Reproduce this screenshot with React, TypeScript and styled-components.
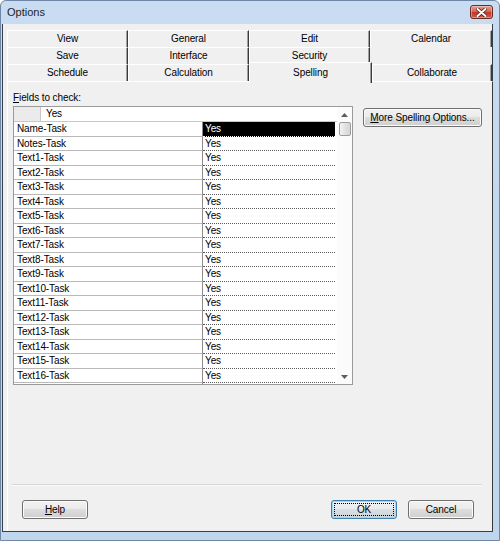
import React from 'react';
import styled, { createGlobalStyle, css } from 'styled-components';

const GlobalStyle = createGlobalStyle`
  html, body {
    margin: 0;
    padding: 0;
    background: #ffffff;
  }
  body {
    font-family: "Liberation Sans", Arial, sans-serif;
    font-size: 10px;
    letter-spacing: -0.1px;
    color: #000;
  }
`;

const Window = styled.div`
  width: 500px;
  height: 541px;
  box-sizing: border-box;
  display: flex;
  flex-direction: column;
  padding: 0 6px 8px 1px;
  border: 1px solid #6f87a6;
  border-radius: 6px 6px 0 0;
  background: linear-gradient(#c9dcf1, #c2d8ee 40%, #bfd6ed);
`;

const TitleBar = styled.div`
  height: 23px;
  display: flex;
  align-items: flex-start;
  justify-content: space-between;
  padding-left: 5px;
`;

const Title = styled.span`
  font-size: 11px;
  line-height: 22px;
  letter-spacing: 0;
  color: #1e1e1e;
`;

const CloseButton = styled.div`
  width: 23px;
  height: 14px;
  margin-top: 4px;
  box-sizing: border-box;
  border: 1px solid #6b2a22;
  border-radius: 3px;
  background: linear-gradient(#e5a092, #d4624f 50%, #c0392a 51%, #cf5c45);
  box-shadow: inset 0 0 0 1px rgba(255, 255, 255, 0.35);
  display: flex;
  align-items: center;
  justify-content: center;
`;

const Client = styled.div`
  flex: 1;
  display: flex;
  flex-direction: column;
  background: #f0f0f0;
  border: 1px solid #34404e;
  border-top: none;
  padding: 6px 0 0 4px;
`;

const TabStrip = styled.div`
  display: flex;
  flex-direction: column;
  width: 486px;
`;

const TabRow = styled.div<{ $cols: string }>`
  display: grid;
  grid-template-columns: ${(p) => p.$cols};
  height: 17px;
`;

const Tab = styled.div<{ $active?: boolean; $empty?: boolean }>`
  box-sizing: border-box;
  height: 17px;
  line-height: 16px;
  text-align: center;
  background: #f0f0f0;
  border-top: 1px solid #ffffff;
  border-left: 1px solid #ffffff;
  border-right: 1px solid #3a3a3a;
  box-shadow: inset -1px 0 #a0a0a0;
  ${(p) =>
    p.$empty &&
    css`
      border: none;
      box-shadow: none;
    `}
  ${(p) =>
    p.$active &&
    css`
      position: relative;
      z-index: 1;
      height: 21px;
      margin-top: -2px;
      line-height: 19px;
    `}
`;

const Panel = styled.div`
  flex: 1;
  display: flex;
  flex-direction: column;
  width: 486px;
  box-sizing: border-box;
  border-top: 1px solid #ffffff;
  border-left: 1px solid #ffffff;
  border-right: 1px solid #3a3a3a;
  padding: 9px 0 0 5px;
`;

const FieldLabel = styled.div`
  line-height: 13px;
  height: 15px;

  u {
    text-decoration: underline;
  }
`;

const ContentRow = styled.div`
  display: flex;
  align-items: flex-start;
  gap: 10px;
`;

const Grid = styled.div`
  width: 340px;
  height: 279px;
  box-sizing: border-box;
  border: 1px solid #9a9a9a;
  background: #ffffff;
  display: flex;
  overflow: hidden;
`;

const GridMain = styled.div`
  flex: 1;
  display: flex;
  flex-direction: column;
  overflow: hidden;
`;

const HeaderRow = styled.div`
  display: flex;
  height: 14px;
  flex: none;
  line-height: 14px;
  border-bottom: 1px solid #c8c8c8;
`;

const HeaderCorner = styled.div`
  width: 26px;
  background: #ebebeb;
  border-right: 1px solid #c8c8c8;
`;

const HeaderCell = styled.div`
  padding-left: 5px;
`;

const Row = styled.div`
  display: flex;
  height: 14.5px;
  flex: none;
  line-height: 13px;
`;

const NameCell = styled.div`
  width: 189px;
  box-sizing: border-box;
  padding-left: 3px;
  border-bottom: 1px solid #b9b9b9;
  border-right: 1px solid #8c8c8c;
  white-space: nowrap;
`;

const ValueCell = styled.div<{ $selected?: boolean }>`
  width: 132px;
  box-sizing: border-box;
  padding-left: 2px;
  border-bottom: 1px dotted #5a5a5a;
  ${(p) =>
    p.$selected &&
    css`
      background: #000000;
      color: #ffffff;
      border-bottom-color: #ffffff;
    `}
`;

const ScrollBar = styled.div`
  width: 15px;
  display: flex;
  flex-direction: column;
  align-items: center;
  background: #fbfbfb;
`;

const ArrowBox = styled.div`
  height: 15px;
  flex: none;
  display: flex;
  align-items: center;
  justify-content: center;
`;

const Thumb = styled.div`
  width: 12px;
  height: 14px;
  flex: none;
  box-sizing: border-box;
  border: 1px solid #9c9c9c;
  border-radius: 2px;
  background: linear-gradient(90deg, #f4f4f4, #e2e2e2 50%, #d6d6d6);
`;

const Track = styled.div`
  flex: 1;
`;

const PushButton = styled.button<{ $default?: boolean; $width: number }>`
  width: ${(p) => p.$width}px;
  height: 19px;
  padding: 0;
  font-family: inherit;
  font-size: 10px;
  letter-spacing: -0.1px;
  color: #000;
  border: 1px solid #707070;
  border-radius: 3px;
  background: linear-gradient(#f2f2f2, #ebebeb 45%, #dddddd 50%, #cfcfcf);
  box-shadow: inset 0 0 0 1px #fbfbfb;
  flex: none;

  u {
    text-decoration: underline;
  }

  ${(p) =>
    p.$default &&
    css`
      border-color: #3c7fb1;
      box-shadow: inset 0 0 0 1px #9fd7f5;
      background: linear-gradient(#f2f4f6, #e8ecef 45%, #dadfe3 50%, #ccd3d8);
      outline: 1px dotted #000;
      outline-offset: -4px;
    `}
`;

const Spacer = styled.div`
  flex: 1;
`;

const Separator = styled.div`
  height: 1px;
  margin: 0 10px 0 -1px;
  background: #d6d6d6;
  border-bottom: 1px solid #fbfbfb;
`;

const ButtonRow = styled.div`
  display: flex;
  align-items: center;
  gap: 11px;
  height: 19px;
  padding: 14px 0 12px 9px;
`;

const Arrow = ({ down }: { down?: boolean }) => (
  <svg width="7" height="4" viewBox="0 0 7 4">
    <polygon points={down ? '0,0 7,0 3.5,4' : '0,4 7,4 3.5,0'} fill="#5c5c5c" />
  </svg>
);

const CloseGlyph = () => (
  <svg width="11" height="9" viewBox="0 0 11 9">
    <path d="M1.5 1 L9.5 8 M9.5 1 L1.5 8" stroke="#5a1a12" strokeWidth="3.6" strokeLinecap="round" />
    <path d="M1.5 1 L9.5 8 M9.5 1 L1.5 8" stroke="#ffffff" strokeWidth="2" strokeLinecap="round" />
  </svg>
);

const tabRows = [
  { cols: '121px 121px 121px 122px', tabs: ['View', 'General', 'Edit', 'Calendar'] },
  { cols: '121px 121px 121px 122px', tabs: ['Save', 'Interface', 'Security', ''] },
  { cols: '121px 121px 123px 120px', tabs: ['Schedule', 'Calculation', 'Spelling', 'Collaborate'] },
];

const fields = [
  'Name-Task',
  'Notes-Task',
  ...Array.from({ length: 17 }, (_, i) => `Text${i + 1}-Task`),
];

function App() {
  return (
    <>
      <GlobalStyle />
      <Window>
        <TitleBar>
          <Title>Options</Title>
          <CloseButton>
            <CloseGlyph />
          </CloseButton>
        </TitleBar>
        <Client>
          <TabStrip>
            {tabRows.map((row) => (
              <TabRow key={row.tabs[0]} $cols={row.cols}>
                {row.tabs.map((t, i) => (
                  <Tab key={t || i} $empty={!t} $active={t === 'Spelling'}>
                    {t}
                  </Tab>
                ))}
              </TabRow>
            ))}
          </TabStrip>
          <Panel>
            <FieldLabel>
              <u>F</u>ields to check:
            </FieldLabel>
            <ContentRow>
              <Grid>
                <GridMain>
                  <HeaderRow>
                    <HeaderCorner />
                    <HeaderCell>Yes</HeaderCell>
                  </HeaderRow>
                  {fields.map((f, i) => (
                    <Row key={f}>
                      <NameCell>{f}</NameCell>
                      <ValueCell $selected={i === 0}>Yes</ValueCell>
                    </Row>
                  ))}
                </GridMain>
                <ScrollBar>
                  <ArrowBox>
                    <Arrow />
                  </ArrowBox>
                  <Thumb />
                  <Track />
                  <ArrowBox>
                    <Arrow down />
                  </ArrowBox>
                </ScrollBar>
              </Grid>
              <PushButton $width={119} style={{ marginTop: 2 }}>
                <u>M</u>ore Spelling Options...
              </PushButton>
            </ContentRow>
            <Spacer />
            <Separator />
            <ButtonRow>
              <PushButton $width={66}>
                <u>H</u>elp
              </PushButton>
              <Spacer />
              <PushButton $width={66} $default>
                OK
              </PushButton>
              <PushButton $width={66} style={{ marginRight: 18 }}>
                Cancel
              </PushButton>
            </ButtonRow>
          </Panel>
        </Client>
      </Window>
    </>
  );
}

export default App;
